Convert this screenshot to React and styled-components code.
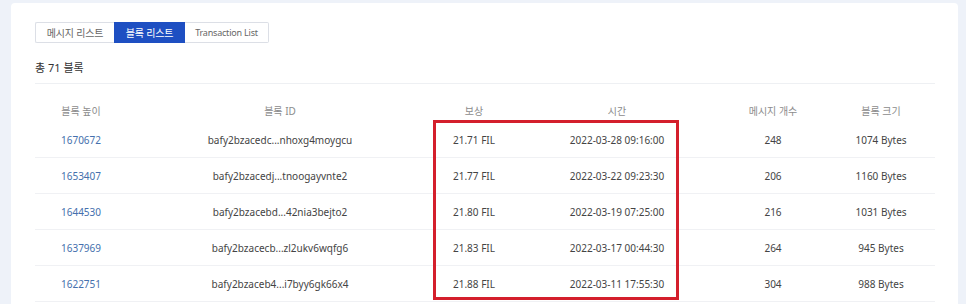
import React from "react";
import styled, { createGlobalStyle } from "styled-components";

const GlobalStyle = createGlobalStyle`
  body {
    margin: 0;
    background: #eef2f9;
    font-family: "Noto Sans", "Noto Sans CJK KR", sans-serif;
    color: #333;
  }
`;

const blocks = [
  { height: "1670672", id: "bafy2bzacedc...nhoxg4moygcu", reward: "21.71 FIL", time: "2022-03-28 09:16:00", msgs: 248, size: "1074 Bytes" },
  { height: "1653407", id: "bafy2bzacedj...tnoogayvnte2", reward: "21.77 FIL", time: "2022-03-22 09:23:30", msgs: 206, size: "1160 Bytes" },
  { height: "1644530", id: "bafy2bzacebd...42nia3bejto2", reward: "21.80 FIL", time: "2022-03-19 07:25:00", msgs: 216, size: "1031 Bytes" },
  { height: "1637969", id: "bafy2bzacecb...zl2ukv6wqfg6", reward: "21.83 FIL", time: "2022-03-17 00:44:30", msgs: 264, size: "945 Bytes" },
  { height: "1622751", id: "bafy2bzaceb4...i7byy6gk66x4", reward: "21.88 FIL", time: "2022-03-11 17:55:30", msgs: 304, size: "988 Bytes" },
];

const tabs = [
  { label: "메시지 리스트", width: 79, size: 10 },
  { label: "블록 리스트", width: 71, size: 10, active: true },
  { label: "Transaction List", width: 84, size: 9 },
];

export default function App() {
  return (
    <>
      <GlobalStyle />
      <Page>
        <Card>
          <Tabs>
            {tabs.map((t) => (
              <Tab key={t.label} $active={t.active} $w={t.width} $size={t.size}>
                {t.label}
              </Tab>
            ))}
          </Tabs>
          <Summary>총 71 블록</Summary>
          <Table>
            <HeadRow>
              <HeadCell>블록 높이</HeadCell>
              <HeadCell>블록 ID</HeadCell>
              <HeadCell>보상</HeadCell>
              <HeadCell>시간</HeadCell>
              <HeadCell>메시지 개수</HeadCell>
              <HeadCell>블록 크기</HeadCell>
            </HeadRow>
            <Body>
              {blocks.map((b) => (
                <Row key={b.height}>
                  <Cell $link>{b.height}</Cell>
                  <Cell>{b.id}</Cell>
                  <Cell>{b.reward}</Cell>
                  <Cell>{b.time}</Cell>
                  <Cell>{b.msgs}</Cell>
                  <Cell>{b.size}</Cell>
                </Row>
              ))}
              <Highlight />
            </Body>
          </Table>
        </Card>
      </Page>
    </>
  );
}

const Page = styled.div`
  padding: 3px 8px 0 11px;
  height: 304px;
  box-sizing: border-box;
  overflow: hidden;
`;

const Card = styled.section`
  width: 947px;
  background: #fff;
  border-radius: 4px 4px 0 0;
  padding: 19px 23px 20px 24px;
  box-sizing: border-box;
  min-height: 320px;
`;

const Tabs = styled.div`
  display: flex;
  height: 21px;
`;

const Tab = styled.div`
  width: ${(p) => p.$w}px;
  height: 21px;
  box-sizing: border-box;
  display: flex;
  align-items: center;
  justify-content: center;
  font-size: ${(p) => p.$size}px;
  letter-spacing: -0.2px;
  white-space: nowrap;
  color: ${(p) => (p.$active ? "#fff" : "#666")};
  background: ${(p) => (p.$active ? "#1e4fc2" : "#fff")};
  border: 1px solid ${(p) => (p.$active ? "#1e4fc2" : "#dcdfe6")};
  &:first-child {
    border-radius: 2px 0 0 2px;
    border-right: none;
  }
  &:last-child {
    border-radius: 0 2px 2px 0;
    border-left: none;
  }
`;

const Summary = styled.div`
  margin-top: 17px;
  padding-bottom: 7px;
  font-size: 11px;
  line-height: 16px;
  color: #333;
  border-bottom: 1px solid #eef0f3;
`;

const Table = styled.div`
  width: 900px;
`;

const columns = "92px 306px 82px 204px 108px 108px";

const HeadRow = styled.div`
  display: grid;
  grid-template-columns: ${columns};
  height: 38px;
  padding-top: 16px;
  box-sizing: border-box;
`;

const HeadCell = styled.div`
  text-align: center;
  font-size: 10px;
  line-height: 22px;
  color: #8c8c8c;
`;

const Body = styled.div`
  position: relative;
`;

const Row = styled.div`
  display: grid;
  grid-template-columns: ${columns};
  height: 36px;
  align-items: center;
  border-bottom: 1px solid #f0f1f4;
  box-sizing: border-box;
`;

const Cell = styled.div`
  text-align: center;
  font-size: 10px;
  color: ${(p) => (p.$link ? "#4570ad" : "#444")};
  white-space: nowrap;
`;

const Highlight = styled.div`
  position: absolute;
  left: 398px;
  top: -2px;
  width: 246px;
  height: 180px;
  border: 3px solid #d41f2c;
  box-sizing: border-box;
  pointer-events: none;
`;
